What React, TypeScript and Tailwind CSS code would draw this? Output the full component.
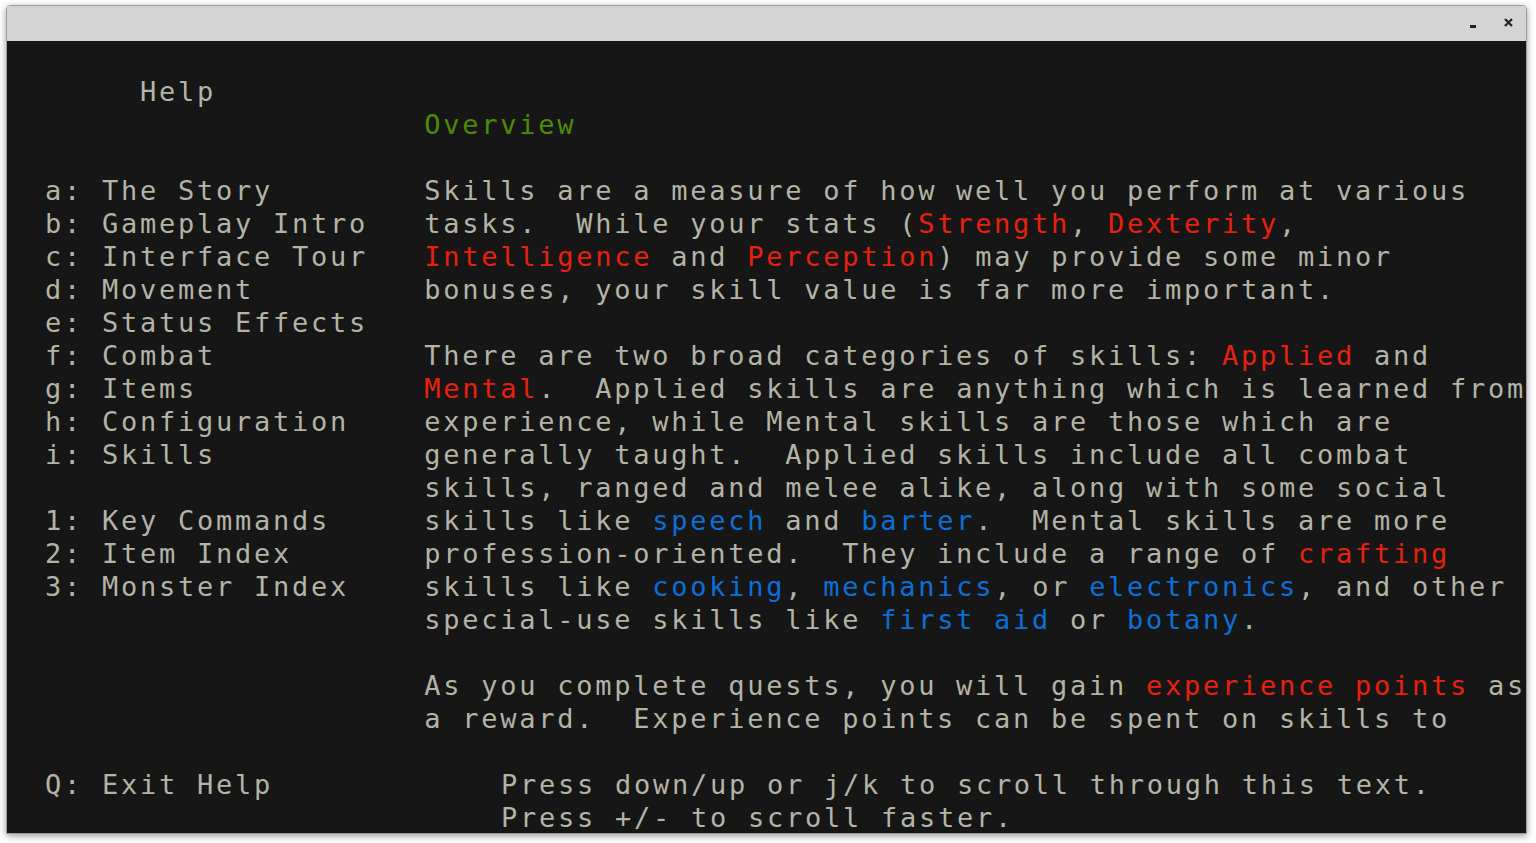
import React from "react";

type Seg = { t: string; c?: "red" | "blue" | "green" };

const colorClass = {
  red: "text-[#e8210e]",
  blue: "text-[#0b6fd8]",
  green: "text-[#4e8a06]",
};

const menu = [
  "a: The Story",
  "b: Gameplay Intro",
  "c: Interface Tour",
  "d: Movement",
  "e: Status Effects",
  "f: Combat",
  "g: Items",
  "h: Configuration",
  "i: Skills",
  "",
  "1: Key Commands",
  "2: Item Index",
  "3: Monster Index",
];

const r = (t: string): Seg => ({ t, c: "red" });
const b = (t: string): Seg => ({ t, c: "blue" });
const p = (t: string): Seg => ({ t });

const body: Seg[][] = [
  [p("Skills are a measure of how well you perform at various")],
  [p("tasks.  While your stats ("), r("Strength"), p(", "), r("Dexterity"), p(",")],
  [r("Intelligence"), p(" and "), r("Perception"), p(") may provide some minor")],
  [p("bonuses, your skill value is far more important.")],
  [],
  [p("There are two broad categories of skills: "), r("Applied"), p(" and")],
  [r("Mental"), p(".  Applied skills are anything which is learned from")],
  [p("experience, while Mental skills are those which are")],
  [p("generally taught.  Applied skills include all combat")],
  [p("skills, ranged and melee alike, along with some social")],
  [p("skills like "), b("speech"), p(" and "), b("barter"), p(".  Mental skills are more")],
  [p("profession-oriented.  They include a range of "), r("crafting")],
  [p("skills like "), b("cooking"), p(", "), b("mechanics"), p(", or "), b("electronics"), p(", and other")],
  [p("special-use skills like "), b("first aid"), p(" or "), b("botany"), p(".")],
  [],
  [p("As you complete quests, you will gain "), r("experience points"), p(" as")],
  [p("a reward.  Experience points can be spent on skills to")],
];

const Line = ({ segs }: { segs: Seg[] }) => (
  <div className="h-[33px] leading-[35px] whitespace-pre">
    {segs.map((s, i) => (
      <span key={i} className={s.c ? colorClass[s.c] : undefined}>
        {s.t}
      </span>
    ))}
  </div>
);

export default function App() {
  return (
    <div className="w-[1536px] h-[843px] bg-white pt-[5px] pl-[6px] overflow-hidden">
      <div className="w-[1521px] border border-[#9c9c9c] rounded-t-[4px] shadow-[0_2px_7px_rgba(0,0,0,0.4)]">
        <div className="h-[35px] bg-[#d4d4d4] rounded-t-[3px] flex items-center justify-end pr-[13px] gap-[27px]">
          <svg width="8" height="14" viewBox="0 0 8 14">
            <rect x="1" y="8" width="6" height="3" fill="#222" />
          </svg>
          <svg width="9" height="9" viewBox="0 0 9 9" className="mb-[2px]">
            <path d="M1 1L8 8M8 1L1 8" stroke="#222" strokeWidth="2.2" />
          </svg>
        </div>
        <div className="h-[792px] bg-[#161616] text-[#b3b3a6] font-['DejaVu_Sans_Mono',monospace] text-[27px] tracking-[2.74px] flex flex-col">
          <div className="flex h-[726px]">
            <div className="w-[418px] pl-[38px]">
              <div className="h-[33px]" />
              <Line segs={[p("     Help")]} />
              <div className="h-[66px]" />
              {menu.map((m, i) => (
                <Line key={i} segs={[p(m)]} />
              ))}
            </div>
            <div className="flex-1">
              <div className="h-[33px]" />
              <div className="h-[33px]" />
              <Line segs={[{ t: "Overview", c: "green" }]} />
              <div className="h-[33px]" />
              {body.map((segs, i) => (
                <Line key={i} segs={segs} />
              ))}
            </div>
          </div>
          <div className="flex">
            <div className="w-[494px] pl-[38px]">
              <Line segs={[p("Q: Exit Help")]} />
            </div>
            <div className="flex-1">
              <Line segs={[p("Press down/up or j/k to scroll through this text.")]} />
              <Line segs={[p("Press +/- to scroll faster.")]} />
            </div>
          </div>
        </div>
      </div>
    </div>
  );
}
